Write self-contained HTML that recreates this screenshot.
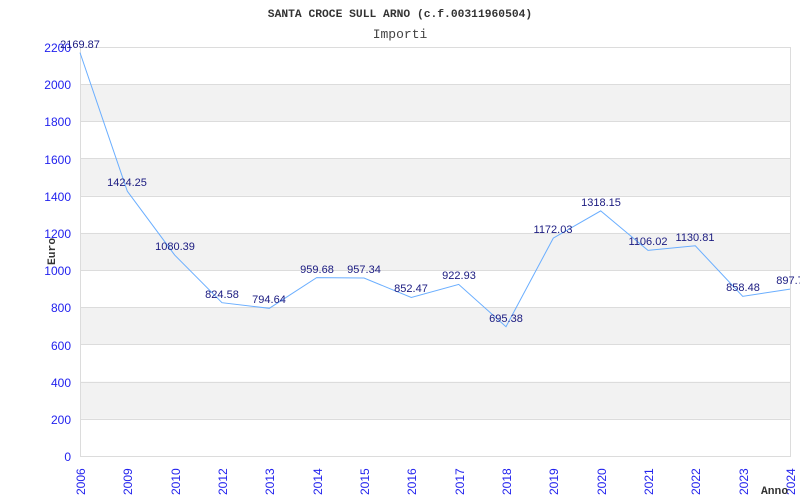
<!DOCTYPE html>
<html><head><meta charset="utf-8"><style>
html,body{margin:0;padding:0;background:#fff;width:800px;height:500px;overflow:hidden}
</style></head><body>
<svg width="800" height="500" xmlns="http://www.w3.org/2000/svg" font-family="Liberation Sans, sans-serif">
<rect width="800" height="500" fill="#fff"/>
<g fill="#f2f2f2">
<rect x="80" y="84.2" width="710" height="37.2"/>
<rect x="80" y="158.6" width="710" height="37.2"/>
<rect x="80" y="232.9" width="710" height="37.2"/>
<rect x="80" y="307.3" width="710" height="37.2"/>
<rect x="80" y="381.6" width="710" height="37.2"/>
</g>
<g stroke="#dcdcdc" stroke-width="1">
<line x1="80" y1="47.5" x2="790" y2="47.5"/>
<line x1="80" y1="84.5" x2="790" y2="84.5"/>
<line x1="80" y1="121.5" x2="790" y2="121.5"/>
<line x1="80" y1="158.5" x2="790" y2="158.5"/>
<line x1="80" y1="196.5" x2="790" y2="196.5"/>
<line x1="80" y1="233.5" x2="790" y2="233.5"/>
<line x1="80" y1="270.5" x2="790" y2="270.5"/>
<line x1="80" y1="307.5" x2="790" y2="307.5"/>
<line x1="80" y1="344.5" x2="790" y2="344.5"/>
<line x1="80" y1="382.5" x2="790" y2="382.5"/>
<line x1="80" y1="419.5" x2="790" y2="419.5"/>
<line x1="80" y1="456.5" x2="790" y2="456.5"/>
<line x1="80.5" y1="47" x2="80.5" y2="457"/>
<line x1="790.5" y1="47" x2="790.5" y2="457"/>
</g>
<text x="400" y="17" text-anchor="middle" font-family="Liberation Mono, monospace" font-weight="bold" font-size="11.3" fill="#333">SANTA CROCE SULL ARNO (c.f.00311960504)</text>
<text x="400" y="38" text-anchor="middle" font-family="Liberation Mono, monospace" font-size="13" fill="#444">Importi</text>
<g font-size="12" fill="#2222ee" text-anchor="end">
<text x="71" y="52">2200</text>
<text x="71" y="89">2000</text>
<text x="71" y="126">1800</text>
<text x="71" y="164">1600</text>
<text x="71" y="201">1400</text>
<text x="71" y="238">1200</text>
<text x="71" y="275">1000</text>
<text x="71" y="312">800</text>
<text x="71" y="350">600</text>
<text x="71" y="387">400</text>
<text x="71" y="424">200</text>
<text x="71" y="461">0</text>
</g>
<g font-size="12" fill="#2222ee">
<text transform="translate(85,495) rotate(-90)">2006</text>
<text transform="translate(132,495) rotate(-90)">2009</text>
<text transform="translate(180,495) rotate(-90)">2010</text>
<text transform="translate(227,495) rotate(-90)">2012</text>
<text transform="translate(274,495) rotate(-90)">2013</text>
<text transform="translate(322,495) rotate(-90)">2014</text>
<text transform="translate(369,495) rotate(-90)">2015</text>
<text transform="translate(416,495) rotate(-90)">2016</text>
<text transform="translate(464,495) rotate(-90)">2017</text>
<text transform="translate(511,495) rotate(-90)">2018</text>
<text transform="translate(558,495) rotate(-90)">2019</text>
<text transform="translate(606,495) rotate(-90)">2020</text>
<text transform="translate(653,495) rotate(-90)">2021</text>
<text transform="translate(700,495) rotate(-90)">2022</text>
<text transform="translate(748,495) rotate(-90)">2023</text>
<text transform="translate(795,495) rotate(-90)">2024</text>
</g>
<text transform="translate(55,265) rotate(-90)" font-family="Liberation Mono, monospace" font-weight="bold" font-size="11.3" fill="#333">Euro</text>
<text x="761" y="494" font-family="Liberation Mono, monospace" font-weight="bold" font-size="11.3" fill="#333">Anno</text>
<polyline fill="none" stroke="#6aaeff" stroke-width="1" points="80,52.6 127.3,191.2 174.7,255.1 222,302.7 269.3,308.3 316.7,277.6 364,278 411.3,297.5 458.7,284.4 506,326.7 553.3,238.1 600.7,210.9 648,250.4 695.3,245.8 742.7,296.4 790,289.1"/>
<g font-size="11" fill="#1a1a80" text-anchor="middle">
<text x="80" y="48">2169.87</text>
<text x="127" y="186">1424.25</text>
<text x="175" y="250">1080.39</text>
<text x="222" y="298">824.58</text>
<text x="269" y="303">794.64</text>
<text x="317" y="273">959.68</text>
<text x="364" y="273">957.34</text>
<text x="411" y="292">852.47</text>
<text x="459" y="279">922.93</text>
<text x="506" y="322">695.38</text>
<text x="553" y="233">1172.03</text>
<text x="601" y="206">1318.15</text>
<text x="648" y="245">1106.02</text>
<text x="695" y="241">1130.81</text>
<text x="743" y="291">858.48</text>
<text x="790" y="284">897.7</text>
</g>
</svg>
</body></html>
